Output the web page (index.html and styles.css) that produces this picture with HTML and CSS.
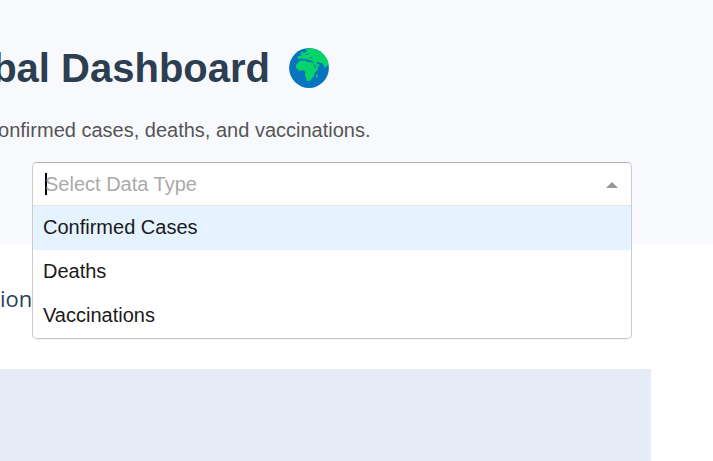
FILE: index.html
```html
<!DOCTYPE html>
<html lang="en">
<head>
<meta charset="utf-8">
<title>Global Dashboard</title>
<link rel="stylesheet" href="styles.css">
</head>
<body>
<header class="hero">
  <div class="title-row">
    <h1 class="title">Global Dashboard</h1>
    <svg class="globe" viewBox="0 0 40 40" aria-hidden="true">
      <circle cx="20" cy="20" r="19.9" fill="#0674bf"/>
      <path fill="#06d368" d="M17 .8Q22-.7 28 1.8Q37 6 39.5 15Q39.3 17.5 37.5 18.5L36 20L34.5 17L33 15L31 15L29 13.8L27.5 14.5L29 16.5H31L29.5 19L27 20.5L26.5 18L24 14.8L23.2 12.7L20.5 12L18 11.5L17 10.5L15.5 11L12 10.5L9 11L8.5 9L10 7.8L12 8L12.5 6L11 5.5L13 3.5L14.5 5L17.5 4Z"/>
      <path fill="#06d368" d="M11 13L16 12.3L18 14L21 14L24 15L26 20L29 20.2L28.5 22L25.5 25L25 28L23 30.5L20.5 33L17.8 33L17 29.5L16 27L16.5 24.5L14.5 22L11 23L7.5 20.5L6.7 18L8 15.5Z"/>
      <path fill="#06d368" d="M27.2 26.5L28.8 26L28.4 29L27 30Z"/>
      <path d="M16.5 6L18 7L19.5 5.5M20.5 9.8L23 9.3" fill="none" stroke="#0674bf" stroke-width=".9"/>
    </svg>
  </div>
  <p class="subtitle">Explore data on confirmed cases, deaths, and vaccinations.</p>
  <div class="select">
    <div class="control"><span class="caret"></span><span class="placeholder">Select Data Type</span><span class="arrow"></span></div>
    <ul class="menu">
      <li class="option focused">Confirmed Cases</li>
      <li class="option">Deaths</li>
      <li class="option">Vaccinations</li>
    </ul>
  </div>
</header>
<main class="chart">
  <div class="chart-title">ion</div>
  <div class="plot"></div>
</main>
</body>
</html>
```
FILE: styles.css
```css
* { box-sizing: border-box; }
body {
  margin: 0;
  height: 461px;
  overflow: hidden;
  background: #fff;
  font: 20px/24px "Liberation Sans", Arial, sans-serif;
}
.hero {
  position: relative;
  height: 244px;
  padding-top: 44px;
  background: #f8f9fd;
}
.title-row {
  display: flex;
  justify-content: flex-end;
  align-items: center;
  gap: 19px;
  width: 329px;
  height: 48px;
}
.title {
  margin: 0;
  color: #2c3e50;
  font-size: 40px;
  line-height: 48px;
  white-space: nowrap;
}
.globe { flex: none; width: 40px; height: 40px; }
.subtitle {
  display: flex;
  justify-content: flex-end;
  width: 370.5px;
  margin: 26px 0 0;
  color: #555;
  white-space: nowrap;
}
.select {
  position: absolute;
  z-index: 1;
  top: 162px;
  left: 32px;
  width: 600px;
  height: 177px;
  border: 1px solid #ccc;
  border-top-color: #b3b3b3;
  border-radius: 5px;
  background: #fff;
  box-shadow: 0 1px 0 rgba(0, 0, 0, .06);
  overflow: hidden;
}
.control {
  display: flex;
  align-items: center;
  height: 43px;
  padding: 0 13px 0 12px;
  border-bottom: 1px solid #e6e6e6;
}
.caret { width: 2px; height: 22px; margin-right: -2px; background: #000; }
.placeholder { color: #aaa; }
.arrow {
  margin: 2px 0 0 auto;
  border: solid transparent;
  border-width: 0 6px 6px;
  border-bottom-color: #999;
}
.menu { margin: 0; padding: 0; list-style: none; }
.option { height: 44px; padding: 0 10px; line-height: 43px; color: #1a1a1a; }
.focused { background: #e5f2ff; }
.chart { width: 651px; }
.chart-title {
  height: 125px;
  padding-top: 39px;
  color: #2a3f5f;
  font: 22px/30px "Open Sans", sans-serif;
}
.plot { height: 92px; background: #e5ecf6; }
```
